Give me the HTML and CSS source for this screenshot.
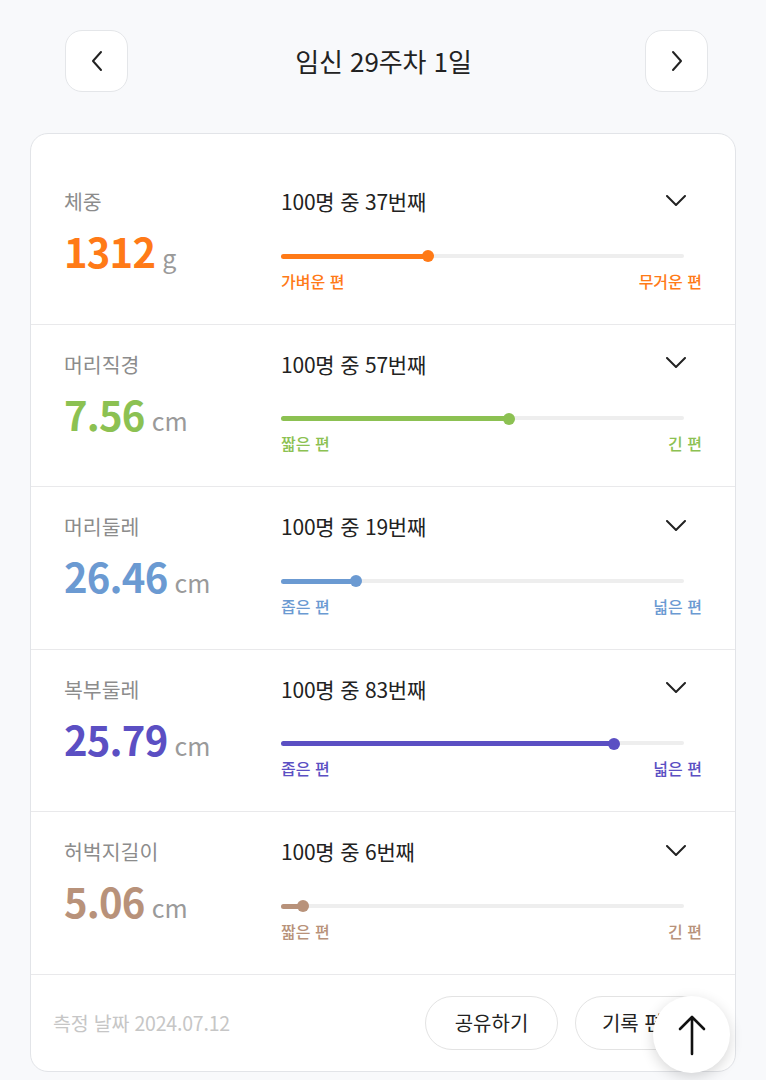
FILE: index.html
```html
<!DOCTYPE html>
<html lang="ko">
<head>
<meta charset="utf-8">
<link rel="stylesheet" href="styles.css">
</head>
<body>
<header class="top">
  <button class="nav-btn" aria-label="이전">
    <svg width="14" height="22" viewBox="0 0 14 22"><path d="M11 2 L3 11 L11 20" fill="none" stroke="#222" stroke-width="2" stroke-linecap="round" stroke-linejoin="round"/></svg>
  </button>
  <h1 class="title">임신 29주차 1일</h1>
  <button class="nav-btn" aria-label="다음">
    <svg width="14" height="22" viewBox="0 0 14 22"><path d="M3 2 L11 11 L3 20" fill="none" stroke="#222" stroke-width="2" stroke-linecap="round" stroke-linejoin="round"/></svg>
  </button>
</header>

<main class="card">
  <section class="row c-orange">
    <div class="left">
      <div class="label">체중</div>
      <div class="value"><span class="num">1312</span><span class="unit">g</span></div>
    </div>
    <div class="right">
      <div class="rank"><span>100명 중 37번째</span>
        <svg class="chev" width="20" height="11" viewBox="0 0 20 11"><path d="M1 1 L10 10 L19 1" fill="none" stroke="#222" stroke-width="2" stroke-linecap="round" stroke-linejoin="round"/></svg>
      </div>
      <div class="track"><div class="fill" style="width:36.5%"></div></div>
      <div class="ends"><span>가벼운 편</span><span>무거운 편</span></div>
    </div>
  </section>

  <section class="row c-green">
    <div class="left">
      <div class="label">머리직경</div>
      <div class="value"><span class="num">7.56</span><span class="unit">cm</span></div>
    </div>
    <div class="right">
      <div class="rank"><span>100명 중 57번째</span>
        <svg class="chev" width="20" height="11" viewBox="0 0 20 11"><path d="M1 1 L10 10 L19 1" fill="none" stroke="#222" stroke-width="2" stroke-linecap="round" stroke-linejoin="round"/></svg>
      </div>
      <div class="track"><div class="fill" style="width:56.5%"></div></div>
      <div class="ends"><span>짧은 편</span><span>긴 편</span></div>
    </div>
  </section>

  <section class="row c-blue">
    <div class="left">
      <div class="label">머리둘레</div>
      <div class="value"><span class="num">26.46</span><span class="unit">cm</span></div>
    </div>
    <div class="right">
      <div class="rank"><span>100명 중 19번째</span>
        <svg class="chev" width="20" height="11" viewBox="0 0 20 11"><path d="M1 1 L10 10 L19 1" fill="none" stroke="#222" stroke-width="2" stroke-linecap="round" stroke-linejoin="round"/></svg>
      </div>
      <div class="track"><div class="fill" style="width:18.5%"></div></div>
      <div class="ends"><span>좁은 편</span><span>넓은 편</span></div>
    </div>
  </section>

  <section class="row c-purple">
    <div class="left">
      <div class="label">복부둘레</div>
      <div class="value"><span class="num">25.79</span><span class="unit">cm</span></div>
    </div>
    <div class="right">
      <div class="rank"><span>100명 중 83번째</span>
        <svg class="chev" width="20" height="11" viewBox="0 0 20 11"><path d="M1 1 L10 10 L19 1" fill="none" stroke="#222" stroke-width="2" stroke-linecap="round" stroke-linejoin="round"/></svg>
      </div>
      <div class="track"><div class="fill" style="width:82.6%"></div></div>
      <div class="ends"><span>좁은 편</span><span>넓은 편</span></div>
    </div>
  </section>

  <section class="row c-brown">
    <div class="left">
      <div class="label">허벅지길이</div>
      <div class="value"><span class="num">5.06</span><span class="unit">cm</span></div>
    </div>
    <div class="right">
      <div class="rank"><span>100명 중 6번째</span>
        <svg class="chev" width="20" height="11" viewBox="0 0 20 11"><path d="M1 1 L10 10 L19 1" fill="none" stroke="#222" stroke-width="2" stroke-linecap="round" stroke-linejoin="round"/></svg>
      </div>
      <div class="track"><div class="fill" style="width:5.5%"></div></div>
      <div class="ends"><span>짧은 편</span><span>긴 편</span></div>
    </div>
  </section>

  <footer class="foot">
    <span class="date">측정 날짜 2024.07.12</span>
    <div class="actions">
      <button class="pill">공유하기</button>
      <button class="pill">기록 편집</button>
    </div>
  </footer>
</main>

<button class="to-top" aria-label="맨 위로">
  <svg width="30" height="42" viewBox="0 0 30 42"><path d="M15 40 V3 M3 15 L15 3 L27 15" fill="none" stroke="#111" stroke-width="2.6" stroke-linecap="round" stroke-linejoin="round"/></svg>
</button>
</body>
</html>
```

FILE: styles.css
```css
* { box-sizing: border-box; }
html, body { margin: 0; padding: 0; }
body {
  background: #f8f9fb;
  font-family: "Noto Sans CJK KR", "Noto Sans", sans-serif;
  color: #222;
  width: 766px;
  height: 1080px;
  overflow: hidden;
}
button { font-family: inherit; cursor: pointer; }

.top {
  display: flex;
  align-items: center;
  justify-content: space-between;
  padding: 30px 58px 0 65px;
}
.nav-btn {
  width: 63px;
  height: 62px;
  border-radius: 17px;
  background: #fff;
  border: 1.5px solid #e4e6e9;
  display: flex;
  align-items: center;
  justify-content: center;
  padding: 0;
}
.title {
  flex: 1;
  margin: 0;
  text-align: center;
  font-size: 26px;
  font-weight: 400;
  letter-spacing: -0.1px;
  line-height: 36px;
  color: #222;
  padding-right: 6px;
}

.card {
  margin: 41px 30px 0;
  background: #fff;
  border: 1px solid #e2e4e8;
  border-radius: 18px;
  padding-top: 28px;
  overflow: hidden;
}

.row {
  display: grid;
  grid-template-columns: 217px 1fr;
  padding: 25px 33px 31px 33px;
  border-bottom: 1px solid #e9e9eb;
}
.label {
  font-size: 20.5px;
  line-height: 28px;
  color: #8c8c8c;
}
.value {
  margin-top: 12px;
  display: flex;
  align-items: baseline;
  line-height: 48px;
}
.num {
  font-size: 40px;
  font-weight: 700;
  letter-spacing: -0.8px;
}
.unit {
  font-size: 25px;
  color: #9a9a9a;
  margin-left: 7px;
}

.rank {
  display: flex;
  justify-content: space-between;
  align-items: center;
  font-size: 21px;
  line-height: 28px;
  letter-spacing: -0.2px;
  color: #222;
}
.chev { margin-right: 16px; margin-top: -2px; }

.track {
  position: relative;
  margin-top: 39px;
  margin-right: 18px;
  height: 4px;
  border-radius: 2px;
  background: #eeeeee;
}
.fill {
  position: relative;
  height: 5px;
  margin-top: -0.5px;
  border-radius: 3px;
  background: currentColor;
}
.fill::after {
  content: "";
  position: absolute;
  right: -6px;
  top: 50%;
  width: 12px;
  height: 12px;
  margin-top: -6px;
  border-radius: 50%;
  background: currentColor;
}
.ends {
  margin-top: 11px;
  display: flex;
  justify-content: space-between;
  font-size: 16px;
  line-height: 24px;
  font-weight: 500;
}

.c-orange .num, .c-orange .track, .c-orange .ends { color: #ff7a17; }
.c-green .num, .c-green .track, .c-green .ends { color: #8cc152; }
.c-blue .num, .c-blue .track, .c-blue .ends { color: #6b9ad2; }
.c-purple .num, .c-purple .track, .c-purple .ends { color: #5b4fc3; }
.c-brown .num, .c-brown .track, .c-brown .ends { color: #b8927a; }

.foot {
  display: flex;
  align-items: center;
  justify-content: space-between;
  padding: 21px 27px 21px 22px;
}
.date {
  font-size: 19.5px;
  color: #c6c6c6;
  letter-spacing: -0.2px;
}
.actions {
  display: flex;
  gap: 17px;
}
.pill {
  height: 54px;
  width: 133px;
  border-radius: 27px;
  border: 1.5px solid #e3e3e3;
  background: #fff;
  font-size: 20px;
  color: #222;
  padding: 0;
}

.to-top {
  position: fixed;
  left: 653px;
  top: 996px;
  width: 77px;
  height: 77px;
  border-radius: 50%;
  border: none;
  background: #fff;
  box-shadow: 0 4px 14px rgba(0, 0, 0, 0.16);
  display: flex;
  align-items: center;
  justify-content: center;
  padding: 0;
}
```
